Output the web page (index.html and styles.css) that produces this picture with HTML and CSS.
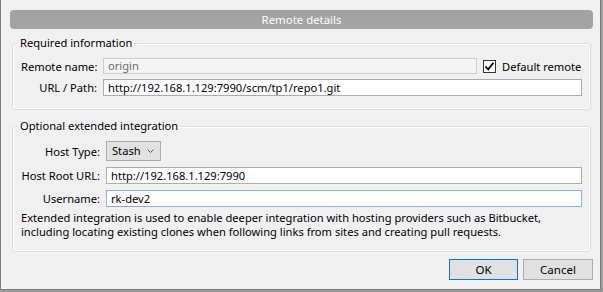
FILE: index.html
```html
<!DOCTYPE html>
<html>
<head>
<meta charset="utf-8">
<link rel="stylesheet" href="styles.css">
</head>
<body>
<div class="dialog">
  <div class="titlebar">Remote details</div>
  <fieldset class="group">
    <legend>Required information</legend>
    <div class="form form-required">
      <span class="lbl">Remote name:</span>
      <div class="field field-disabled">origin</div>
      <label class="check">
        <span class="box"><svg width="11" height="11" viewBox="0 0 11 11"><polyline points="1.5,5.5 4.2,8.3 9.5,1.8" fill="none" stroke="#000" stroke-width="1.8"/></svg></span>
        Default remote
      </label>
      <span class="lbl">URL / Path:</span>
      <div class="field span2">http://192.168.1.129:7990/scm/tp1/repo1.git</div>
    </div>
  </fieldset>
  <fieldset class="group group-optional">
    <legend>Optional extended integration</legend>
    <div class="form form-optional">
      <span class="lbl">Host Type:</span>
      <div class="combo-cell">
        <div class="combo">Stash<svg class="chev" width="7" height="4" viewBox="0 0 7 4"><polyline points="0.5,0.5 3.5,3.5 6.5,0.5" fill="none" stroke="#555" stroke-width="1"/></svg></div>
      </div>
      <span class="lbl">Host Root URL:</span>
      <div class="field">http://192.168.1.129:7990</div>
      <span class="lbl">Username:</span>
      <div class="field field-focus">rk-dev2</div>
    </div>
    <p class="note">Extended integration is used to enable deeper integration with hosting providers such as Bitbucket,<br>including locating existing clones when following links from sites and creating pull requests.</p>
  </fieldset>
  <div class="buttons">
    <button class="btn btn-default">OK</button>
    <button class="btn">Cancel</button>
  </div>
</div>
</body>
</html>
```
FILE: styles.css
```css
html, body {
  margin: 0;
  padding: 0;
}
body {
  width: 603px;
  height: 292px;
  overflow: hidden;
  background: #9a9a9a;
  font-family: "Noto Sans", sans-serif;
  font-size: 11.15px;
  color: #000;
}
.dialog {
  box-sizing: border-box;
  width: 601px;
  height: 290px;
  background: #f0f0f0;
  border: 1px solid #7a7a7a;
  border-top: none;
  display: flex;
  flex-direction: column;
}
.titlebar {
  margin: 10px 7px 0 9px;
  height: 19px;
  background: #a3a3a3;
  border-radius: 4px;
  color: #fff;
  font-size: 11.4px;
  line-height: 19px;
  text-align: center;
}
.group {
  margin: 6px 9px 0 11px;
  padding: 7px 8px 12px 8px;
  border: 1px solid #d5dfe5;
  border-radius: 3px;
  box-shadow: inset 0 0 0 1px #fff;
  min-width: 0;
}
.group:first-of-type {
  padding-bottom: 13px;
}
.group-optional {
  margin-top: 8px;
}
.group legend {
  margin-left: -3px;
  padding: 0 2px;
  height: 16px;
  line-height: 16px;
}
.form {
  display: grid;
  align-items: center;
  column-gap: 6px;
}
.form-required {
  grid-template-columns: 76px 374px 1fr;
  row-gap: 5px;
}
.form-optional {
  grid-template-columns: 79px 1fr;
  grid-template-rows: 20px 17px 17px;
  row-gap: 6px;
}
.form-optional .field-focus {
  margin-top: -1px;
}
.lbl {
  text-align: right;
  white-space: nowrap;
}
.field {
  box-sizing: border-box;
  height: 17px;
  line-height: 15px;
  padding: 0 4px;
  background: #fff;
  border: 1px solid #acacac;
  white-space: nowrap;
  overflow: hidden;
}
.field-disabled {
  background: #f4f4f4;
  border-color: #cccccc;
  color: #6d6d6d;
  height: 16px;
  line-height: 14px;
}
.field-focus {
  border-color: #7eb4ea;
}
.span2 {
  grid-column: 2 / 4;
}
.check {
  display: flex;
  align-items: center;
  gap: 6px;
  white-space: nowrap;
}
.box {
  box-sizing: border-box;
  width: 13px;
  height: 13px;
  border: 1px solid #333;
  background: #fff;
  display: flex;
  align-items: center;
  justify-content: center;
}
.combo-cell {
  display: flex;
}
.combo {
  box-sizing: border-box;
  width: 55px;
  height: 20px;
  padding: 0 0 0 5px;
  border: 1px solid #acacac;
  background: #e1e1e1;
  line-height: 18px;
  display: flex;
  align-items: center;
}
.chev {
  margin-left: auto;
  margin-right: 6px;
}
.note {
  margin: 4px 0 0 0;
  line-height: 14px;
  white-space: nowrap;
}
.buttons {
  display: flex;
  justify-content: flex-end;
  gap: 5px;
  margin: 7px 7px 0 0;
}
.btn {
  box-sizing: border-box;
  height: 21px;
  padding: 0;
  font-family: inherit;
  font-size: 11.5px;
  color: #000;
  background: #e1e1e1;
  border: 1px solid #adadad;
  width: 70px;
}
.btn-default {
  width: 69px;
  border-color: #0078d7;
}
```
